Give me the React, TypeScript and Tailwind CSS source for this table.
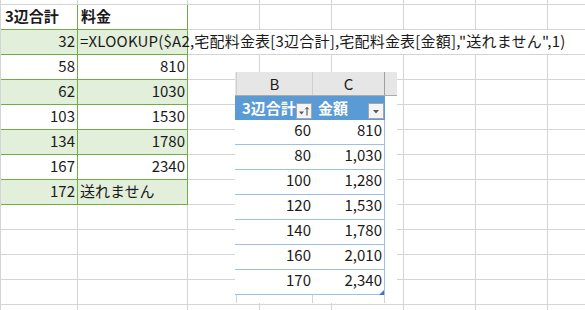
import React from "react";

// worksheet rows: 3辺合計 / 料金, banded every other row
const sheetRows: { size: number; fee: string; band: boolean }[] = [
  { size: 32, fee: '=XLOOKUP($A2,宅配料金表[3辺合計],宅配料金表[金額],"送れません",1)', band: true },
  { size: 58, fee: "810", band: false },
  { size: 62, fee: "1030", band: true },
  { size: 103, fee: "1530", band: false },
  { size: 134, fee: "1780", band: true },
  { size: 167, fee: "2340", band: false },
  { size: 172, fee: "送れません", band: true },
];

// lookup table shown in the floating picture
const priceTable = [
  ["60", "810"],
  ["80", "1,030"],
  ["100", "1,280"],
  ["120", "1,530"],
  ["140", "1,780"],
  ["160", "2,010"],
  ["170", "2,340"],
];

function BlankCells({ spill = false }: { spill?: boolean }) {
  return (
    <>
      {[0, 1, 2, 3, 4, 5].map((i) => (
        <div
          key={i}
          className={`w-[72px] shrink-0 border-b border-[#d4d4d4] ${spill ? "" : "border-r"}`}
        />
      ))}
    </>
  );
}

function FilterButton({ sorted = false }: { sorted?: boolean }) {
  return (
    <div className="flex h-[16px] w-[16px] items-center justify-center border border-[#a6a6a6] bg-[#f4f4f4]">
      <svg width="12" height="12" viewBox="0 0 12 12">
        {sorted ? (
          <>
            <path d="M1 6.5h5l-2.5 3z" fill="#595959" />
            <path d="M9 10.5V2.5M7.3 4.3 9 2.5l1.7 1.8" stroke="#404040" strokeWidth="1" fill="none" />
          </>
        ) : (
          <path d="M3 5h6l-3 3.5z" fill="#595959" />
        )}
      </svg>
    </div>
  );
}

function TablePicture() {
  return (
    <div className="absolute left-[235px] top-[72px] flex h-[231px] w-[162px] flex-col bg-white text-[15px] text-[#1a1a1a]">
      {/* column letters */}
      <div className="flex h-[24px] shrink-0 border-b border-[#ababab] bg-[#e6e6e6] leading-[23px]">
        <div className="w-[2px] border-r border-[#d0d0d0]" />
        <div className="w-[76px] border-r border-[#cfcfcf] text-center">B</div>
        <div className="w-[72px] border-r border-[#9e9e9e] text-center">C</div>
        <div className="flex-1" />
      </div>
      {/* header row */}
      <div className="flex h-[24px] w-[150px] shrink-0 items-end bg-[#5b9bd5] pb-[1px] font-bold leading-[23px] text-white">
        <div className="flex w-[78px] items-end justify-between pl-[7px] pr-[1px]">
          <span className="self-center">3辺合計</span>
          <FilterButton sorted />
        </div>
        <div className="flex w-[72px] items-end justify-between pl-[5px] pr-[1px]">
          <span className="self-center">金額</span>
          <FilterButton />
        </div>
      </div>
      {/* data rows */}
      <div className="relative w-[150px] border-r border-[#9bc2e6]">
        {priceTable.map(([size, price]) => (
          <div key={size} className="flex h-[25px] border-b border-[#9bc2e6] leading-[20px]">
            <div className="w-[78px] pr-[2px] text-right">{size}</div>
            <div className="w-[71px] pr-[2px] text-right">{price}</div>
          </div>
        ))}
        <svg className="absolute bottom-0 right-0" width="5" height="5" viewBox="0 0 5 5">
          <path d="M5 0v5H0z" fill="#4472c4" />
        </svg>
      </div>
      {/* gridline stubs below the table */}
      <div className="flex flex-1">
        <div className="w-[2px] border-r border-[#d4d4d4]" />
        <div className="w-[76px] border-r border-[#d4d4d4]" />
        <div className="w-[72px] border-r border-[#d4d4d4]" />
      </div>
    </div>
  );
}

export default function App() {
  return (
    <div
      className="relative h-[310px] w-[585px] overflow-hidden bg-white text-[15px] text-[#1a1a1a]"
      style={{ fontFamily: '"Noto Sans CJK JP", "Noto Sans", sans-serif' }}
    >
      <div className="flex flex-col border-l border-[#d4d4d4]">
        {/* top edge of the row above */}
        <div className="flex h-[5px]">
          <div className="w-[77px] shrink-0 border-b border-r border-[#d4d4d4]" />
          <div className="w-[110px] shrink-0 border-b border-r border-[#d4d4d4]" />
          <BlankCells />
        </div>

        {/* table header */}
        <div className="flex h-[25px] font-bold leading-[21px]">
          <div className="w-[77px] shrink-0 border-b border-r border-[#70ad47] pl-[4px]">3辺合計</div>
          <div className="w-[110px] shrink-0 border-b border-r border-[#70ad47] pl-[3px]">料金</div>
          <BlankCells />
        </div>

        {sheetRows.map((row, i) => {
          const isNumber = /^\d+$/.test(row.fee);
          return (
            <div key={row.size} className="flex h-[25px] leading-[21px]">
              <div
                className={`w-[77px] shrink-0 border-b border-r border-[#70ad47] pr-[2px] text-right ${
                  row.band ? "bg-[#e2efda]" : ""
                }`}
              >
                {row.size}
              </div>
              <div
                className={`relative z-10 w-[110px] shrink-0 whitespace-nowrap border-b border-r border-[#70ad47] ${
                  row.band ? "bg-[#e2efda]" : ""
                } ${isNumber ? "pr-[2px] text-right" : "pl-[2px]"} ${i === 0 ? "tracking-[0.2px]" : ""}`}
              >
                {row.fee}
              </div>
              <BlankCells spill={i === 0} />
            </div>
          );
        })}

        {[0, 1, 2, 3, 4].map((i) => (
          <div key={i} className="flex h-[25px]">
            <div className="w-[77px] shrink-0 border-b border-r border-[#d4d4d4]" />
            <div className="w-[110px] shrink-0 border-b border-r border-[#d4d4d4]" />
            <BlankCells />
          </div>
        ))}
      </div>

      <TablePicture />
    </div>
  );
}
